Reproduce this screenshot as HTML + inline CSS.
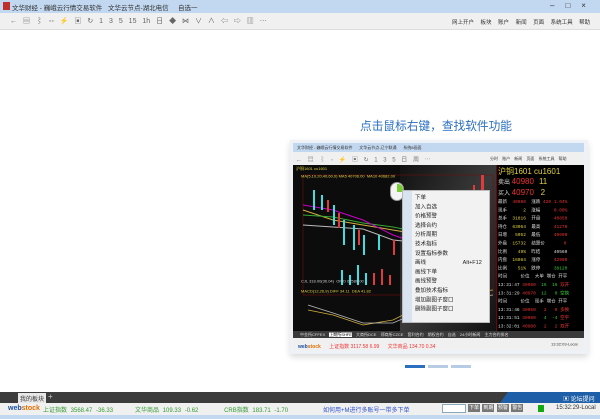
<!DOCTYPE html>
<html><head><meta charset="utf-8"><style>
*{margin:0;padding:0;box-sizing:border-box}
body{width:600px;height:419px;overflow:hidden;background:#fff;font-family:"Liberation Sans","Noto Sans CJK SC",sans-serif;position:relative}
.a{position:absolute}
.t{font-size:7px;white-space:nowrap}
.s{transform-origin:0 0;transform:scale(.5);white-space:pre}
</style></head><body>
<!-- title bar -->
<div class="a" style="left:0;top:0;width:600px;height:13px;background:#c2d8f0"></div>
<div class="a" style="left:3px;top:2px;width:7px;height:8px;background:#c0302a"></div>
<div class="a t" style="left:12px;top:2px;color:#333;font-size:6.5px">文华财经 - 巍峨云行情交易软件</div>
<div class="a t" style="left:108px;top:2px;color:#333;font-size:6.5px">文华云节点-湖北电信</div>
<div class="a t" style="left:178px;top:2px;color:#333;font-size:6.5px">自选一</div>
<div class="a t" style="left:550px;top:1px;color:#333;font-size:8px;letter-spacing:11px">–□×</div>
<!-- toolbar -->
<div class="a" style="left:0;top:13px;width:600px;height:17px;background:#f0f0f0;border-bottom:1px solid #ddd"></div>
<div class="a t" style="left:10px;top:16px;color:#666;font-size:7px;word-spacing:4px">← ▤ ⌇ ◦◦ ⚡ ▣ ↻ 1 3 5 15 1h 日 ◆ ⋈ ∨ ∧ ⇦ ⇨ ▥ ⋯</div>
<div class="a s" style="left:452px;top:18px;color:#333;font-size:11px;word-spacing:10px">网上开户 板块 账户 新闻 页面 系统工具 帮助</div>
<!-- heading -->
<div class="a" style="left:360px;top:117px;font-size:11.7px;color:#2a6fc0;white-space:nowrap">点击鼠标右键，查找软件功能</div>
<!-- inner screenshot -->
<div class="a" style="left:290px;top:140px;width:298px;height:214px;background:#eef1f5;box-shadow:0 3px 6px rgba(0,0,0,.15)"></div>
<div class="a" style="left:293px;top:143px;width:291px;height:9px;background:#c2d8f0"></div>
<div class="a s" style="left:297px;top:145px;font-size:8px;color:#333">文华财经 - 巍峨云行情交易软件      文华云节点-辽宁联通      系统8画面</div>
<div class="a" style="left:293px;top:152px;width:291px;height:13px;background:#f0f0f0"></div>
<div class="a s" style="left:296px;top:155px;font-size:12px;color:#777;word-spacing:8px">← ▤ ⌇ ◦ ⚡ ▣ ↻ 1 3 5 日 周 ⋯</div>
<div class="a s" style="left:490px;top:156px;font-size:8px;color:#333;word-spacing:6px">分时 账户 新闻 页面 系统工具 帮助</div>
<div class="a" style="left:293px;top:165px;width:291px;height:166px;background:#0c0c0c"></div>
<div class="a" style="left:400px;top:165px;width:96px;height:166px;background:linear-gradient(120deg,#111 0%,#3a3a3a 50%,#111 100%)"></div>
<!-- chart -->
<svg class="a" style="left:293px;top:165px" width="203" height="166">
<rect x="10" y="10" width="190" height="120" fill="none" stroke="#701010" stroke-width=".6"/>
<polyline points="10,45 40,55 70,60 100,65 130,70 160,75 190,72" fill="none" stroke="#d0b040" stroke-width="1"/>
<polyline points="10,50 40,52 70,58 100,62 130,68 160,72 190,70" fill="none" stroke="#3a3" stroke-width="1"/>
<polyline points="10,40 40,45 70,55 100,70 130,80 160,85" fill="none" stroke="#c0c" stroke-width="1"/>
<polyline points="10,60 40,62 70,64 100,75 130,78 160,80" fill="none" stroke="#bbb" stroke-width="1"/>
<g fill="#3ce0e0"><rect x="20" y="25" width="2" height="20"/><rect x="28" y="30" width="2" height="15"/><rect x="40" y="40" width="2" height="20"/><rect x="50" y="55" width="2" height="25"/><rect x="60" y="60" width="2" height="25"/><rect x="70" y="70" width="2" height="20"/><rect x="85" y="70" width="2" height="15"/><rect x="120" y="90" width="2" height="15"/><rect x="150" y="90" width="2" height="20"/></g>
<g fill="#e03a3a"><rect x="34" y="35" width="2" height="12"/><rect x="45" y="48" width="2" height="15"/><rect x="65" y="65" width="2" height="15"/><rect x="100" y="75" width="2" height="15"/><rect x="140" y="80" width="2" height="15"/><rect x="188" y="10" width="3" height="40"/><rect x="180" y="20" width="2" height="30"/></g>
<g fill="#3ce0e0"><rect x="48" y="105" width="2" height="15"/><rect x="56" y="110" width="2" height="10"/><rect x="64" y="100" width="2" height="20"/><rect x="72" y="108" width="2" height="12"/></g>
<g fill="#e03a3a"><rect x="80" y="108" width="2" height="12"/><rect x="88" y="104" width="2" height="16"/><rect x="96" y="110" width="2" height="10"/></g>
<polyline points="15,145 40,150 70,160 100,155 130,140 160,130 200,125" fill="none" stroke="#d0b040" stroke-width=".8"/>
<polyline points="15,140 40,148 70,158 100,158 130,145 160,135 200,130" fill="none" stroke="#bbb" stroke-width=".8"/>
</svg>
<div class="a s" style="left:296px;top:166px;font-size:8px;color:#e0d040">沪铜1601 cu1601</div>
<div class="a s" style="left:301px;top:174px;font-size:8px;color:#e0d040">MA(5,10,20,40,60,0) MA5 40706.00  MA10 40682.00</div>
<div class="a s" style="left:301px;top:279px;font-size:8px;color:#ccc">CJL 318.00(36.04)  OPID 62586.00</div>
<div class="a s" style="left:301px;top:289px;font-size:8px;color:#e0d040">MACD(12,26,9) DIFF 34.11  DEA 41.82</div>
<!-- mouse -->
<div class="a" style="left:390px;top:182px;width:14px;height:19px;border-radius:7px;background:#f4f4f4;border:1px solid #999"></div>
<div class="a" style="left:397px;top:184px;width:6px;height:8px;border-radius:0 5px 0 0;background:#7c3"></div>
<!-- context menu -->
<div class="a" style="left:402px;top:190px;width:88px;height:133px;background:#f2f2f2;border:1px solid #bbb"></div>
<div class="a" style="left:403px;top:191px;width:9px;height:131px;background:#d8e2f0"></div>
<div class="a s" style="left:415px;top:193px;font-size:11px;line-height:18.6px;color:#222">下单
加入自选
价格预警
选择合约
分析周期
技术指标
设置指标参数
画线                        Alt+F12
画线下单
画线预警
叠加技术指标
增加副图子窗口
删除副图子窗口</div>
<!-- right panel -->
<div class="a" style="left:496px;top:165px;width:88px;height:166px;background:#000;border-left:1px solid #700"></div>
<div class="a" style="left:498px;top:166px;font-size:8px;color:#e0d040;white-space:nowrap">沪铜1601 cu1601</div>
<div class="a" style="left:498px;top:177px;font-size:6px;line-height:10px;color:#ddd;white-space:pre">卖出 <span style="color:#e33;font-size:8px">40980</span>   <span style="color:#e0d040;font-size:8px">11</span>
买入 <span style="color:#e33;font-size:8px">40970</span>    <span style="color:#e0d040;font-size:8px">2</span></div>
<div class="a s" style="left:498px;top:198px;font-size:9px;line-height:16.6px;color:#ddd;font-family:'Liberation Mono','Noto Sans CJK SC',monospace">最新  <span style="color:#e33">40980</span>  涨跌 <span style="color:#e33">420 1.04%</span>
现手      <span style="color:#e0d040">2</span>  涨幅     <span style="color:#e33">0.00%</span>
总手  <span style="color:#e0d040">31816</span>  开盘     <span style="color:#e33">40850</span>
持仓  <span style="color:#e0d040">63064</span>  最高     <span style="color:#e33">41270</span>
日增   <span style="color:#e0d040">5052</span>  最低     <span style="color:#e33">40690</span>
外盘  <span style="color:#e0d040">15732</span>  结算价       <span style="color:#e33">0</span>
比例    <span style="color:#e0d040">49%</span>  昨结     40560
内盘  <span style="color:#e0d040">16084</span>  涨停     <span style="color:#e33">42990</span>
比例    <span style="color:#e0d040">51%</span>  跌停     <span style="color:#3c3">38120</span>
时间     价位  大单 增仓 开平
13:31:47 <span style="color:#e33">40980</span>  <span style="color:#3c3">16  16</span> <span style="color:#e33">双开</span>
13:31:29 <span style="color:#e33">40970</span>  <span style="color:#3c3">12   0</span> <span style="color:#3c3">空换</span>
时间     价位  现手 增仓 开平
13:31:46 <span style="color:#e33">40950</span>   <span style="color:#e33">2   0</span> <span style="color:#e33">多换</span>
13:31:51 <span style="color:#e33">40980</span>   <span style="color:#3c3">4  -4</span> <span style="color:#e33">空平</span>
13:32:01 <span style="color:#e33">40980</span>   <span style="color:#e33">2   2</span> <span style="color:#e33">双开</span></div>
<div class="a" style="left:293px;top:331px;width:291px;height:7px;background:#3a3a3a"></div>
<div class="a s" style="left:300px;top:332px;font-size:8px;color:#ddd;word-spacing:6px">中金所CFFEX <span style="background:#fff;color:#000">上期所SHFE</span> 大商所DCE 郑商所CZCE 套利合约 期权合约 自选 24小时新闻 主力合约排名</div>
<div class="a" style="left:293px;top:338px;width:291px;height:12px;background:#f0f0f0"></div>
<div class="a s" style="left:298px;top:342px;font-size:10px;color:#1a4fa0;font-weight:bold">web<span style="color:#e07000">stock</span> <span style="color:#e33;font-weight:normal">     上证指数 3117.58 6.99      文华商品 134.70 0.34</span></div>
<div class="a s" style="left:551px;top:342px;font-size:8px;color:#333">13:32:03-Local</div>
<!-- dots -->
<div class="a" style="left:405px;top:365px;width:20px;height:3px;background:#2a6fc0"></div>
<div class="a" style="left:428px;top:365px;width:20px;height:3px;background:#b8cbe4"></div>
<div class="a" style="left:451px;top:365px;width:20px;height:3px;background:#b8cbe4"></div>
<!-- bottom tabs -->
<div class="a" style="left:0;top:392px;width:600px;height:11px;background:#3c3c3c"></div>
<div class="a t" style="left:18px;top:393px;width:28px;height:10px;background:#e8e8e8;color:#333;font-size:6px;padding:1px 2px">我的板块</div>
<div class="a t" style="left:48px;top:392px;color:#ccc;font-size:8px">+</div>
<div class="a" style="left:500px;top:392px;width:100px;height:11px;background:#1f5fa8;clip-path:polygon(8% 0,100% 0,100% 100%,0 100%)"></div>
<div class="a t" style="left:563px;top:394px;color:#fff;font-size:6px">▣ 论坛提问</div>
<!-- status bar -->
<div class="a" style="left:0;top:403px;width:600px;height:12px;background:#f0f0f0"></div>
<div class="a t" style="left:8px;top:405px;font-size:7px;color:#1a4fa0;font-weight:bold">web<span style="color:#e07000">stock</span></div>
<div class="a t" style="left:43px;top:405px;font-size:6px;color:#393;word-spacing:2px">上证指数 3568.47 -36.33 &nbsp;&nbsp;&nbsp;&nbsp; 文华商品 109.33 -0.62 &nbsp;&nbsp;&nbsp;&nbsp;&nbsp; CRB指数 183.71 -1.70</div>
<div class="a t" style="left:323px;top:405px;font-size:6px;color:#2a4fd0">如何用+M进行多账号一带多下单</div>
<div class="a" style="left:442px;top:404px;width:24px;height:9px;background:#fff;border:1px solid #8ab"></div>
<div class="a t" style="left:468px;top:404px;font-size:5px;color:#fff;word-spacing:1px"><span style="background:#777;padding:1px">下单</span> <span style="background:#777;padding:1px">到期</span> <span style="background:#777;padding:1px">预警</span> <span style="background:#777;padding:1px">警告</span></div>
<div class="a" style="left:538px;top:405px;width:6px;height:7px;background:#1a1"></div>
<div class="a t" style="left:556px;top:405px;font-size:6px;color:#333">15:32:29-Local</div>
<div class="a" style="left:0;top:415px;width:600px;height:4px;background:#c2d8f0"></div>
</body></html>
